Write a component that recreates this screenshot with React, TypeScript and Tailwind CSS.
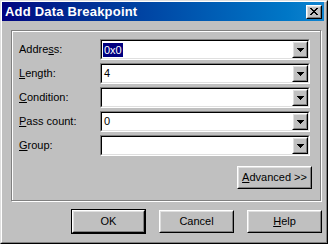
import React from 'react';

const font = { fontFamily: '"Liberation Sans", Arial, sans-serif' };

function Raised({ children, className = '' }: { children?: React.ReactNode; className?: string }) {
  return (
    <div className={`border-t border-l border-white border-r border-b border-r-black border-b-black ${className}`}>
      <div className="flex h-full w-full items-center justify-center border-t border-l border-[#dfdfdf] border-r border-b border-r-[#808080] border-b-[#808080] bg-[#c0c0c0]">
        {children}
      </div>
    </div>
  );
}

function Combo({ value, selected }: { value?: string; selected?: boolean }) {
  return (
    <div className="h-[21px] w-[210px] border-t border-l border-[#808080] border-r border-b border-r-white border-b-white">
      <div className="flex h-full border-t border-l border-black border-r border-b border-r-[#dfdfdf] border-b-[#dfdfdf] bg-white">
        <div className="flex flex-1 items-center pl-[1px] text-[11px] text-black">
          {value !== undefined &&
            (selected ? (
              <span className="bg-[#000080] px-[1px] leading-[14px] text-white">{value}</span>
            ) : (
              <span className="px-[1px]">{value}</span>
            ))}
        </div>
        <Raised className="h-full w-[16px]">
          <svg width="7" height="4" viewBox="0 0 7 4">
            <path d="M0 0h7v1h-1v1h-1v1h-1v1h-1v-1h-1v-1h-1v-1h-1z" fill="#000" />
          </svg>
        </Raised>
      </div>
    </div>
  );
}

function Label({ pre, u, post }: { pre?: string; u: string; post: string }) {
  return (
    <div className="w-[81px] text-[11px] text-black">
      {pre}
      <span className="underline underline-offset-[1px]">{u}</span>
      {post}
    </div>
  );
}

const rows = [
  { label: { pre: 'Addre', u: 's', post: 's:' }, value: '0x0', selected: true },
  { label: { u: 'L', post: 'ength:' }, value: '4' },
  { label: { u: 'C', post: 'ondition:' } },
  { label: { u: 'P', post: 'ass count:' }, value: '0' },
  { label: { u: 'G', post: 'roup:' } },
];

export default function App() {
  return (
    <div
      className="h-[244px] w-[328px] overflow-hidden border-t border-l border-[#dfdfdf] border-r border-b border-r-black border-b-black bg-[#c0c0c0]"
      style={font}
    >
      <div className="flex h-full flex-col border-t border-l border-white border-r border-b border-r-[#808080] border-b-[#808080]">
        {/* title bar */}
        <div className="mr-[2px] flex h-[19px] items-center justify-between bg-linear-to-r from-[#000080] to-[#1084d0] pl-[3px] pr-[2px]">
          <span className="text-[13px] font-bold tracking-[0.2px] text-white">Add Data Breakpoint</span>
          <Raised className="h-[14px] w-[16px]">
            <svg width="8" height="7" viewBox="0 0 8 7">
              <path
                d="M0 0h2v1h-2zM6 0h2v1h-2zM1 1h2v1h-2zM5 1h2v1h-2zM2 2h4v1h-4zM3 3h2v1h-2zM2 4h4v1h-4zM1 5h2v1h-2zM5 5h2v1h-2zM0 6h2v1h-2zM6 6h2v1h-2z"
                fill="#000"
              />
            </svg>
          </Raised>
        </div>

        {/* group frame */}
        <div className="ml-[9px] mt-[9px] h-[171px] w-[310px] border border-[#808080] shadow-[1px_1px_0_#fff,inset_1px_1px_0_#fff]">
          <div className="flex flex-col gap-[3px] pl-[7px] pt-[8px]">
            {rows.map((r, i) => (
              <div key={i} className="flex items-center">
                <Label {...r.label} />
                <Combo value={r.value} selected={r.selected} />
              </div>
            ))}
          </div>
          <div className="mt-[10px] flex justify-end pr-[8px]">
            <Raised className="h-[23px] w-[75px]">
              <span className="text-[11px] text-black">
                <span className="underline underline-offset-[1px]">A</span>dvanced &gt;&gt;
              </span>
            </Raised>
          </div>
        </div>

        {/* buttons */}
        <div className="ml-[69px] mt-[8px] flex gap-[13px]">
          <div className="h-[25px] w-[75px] border border-black">
            <Raised className="h-full w-full">
              <span className="text-[11px] text-black">OK</span>
            </Raised>
          </div>
          <Raised className="mt-[1px] h-[23px] w-[75px]">
            <span className="text-[11px] text-black">Cancel</span>
          </Raised>
          <Raised className="mt-[1px] h-[23px] w-[75px]">
            <span className="text-[11px] text-black">
              <span className="underline underline-offset-[1px]">H</span>elp
            </span>
          </Raised>
        </div>
      </div>
    </div>
  );
}
